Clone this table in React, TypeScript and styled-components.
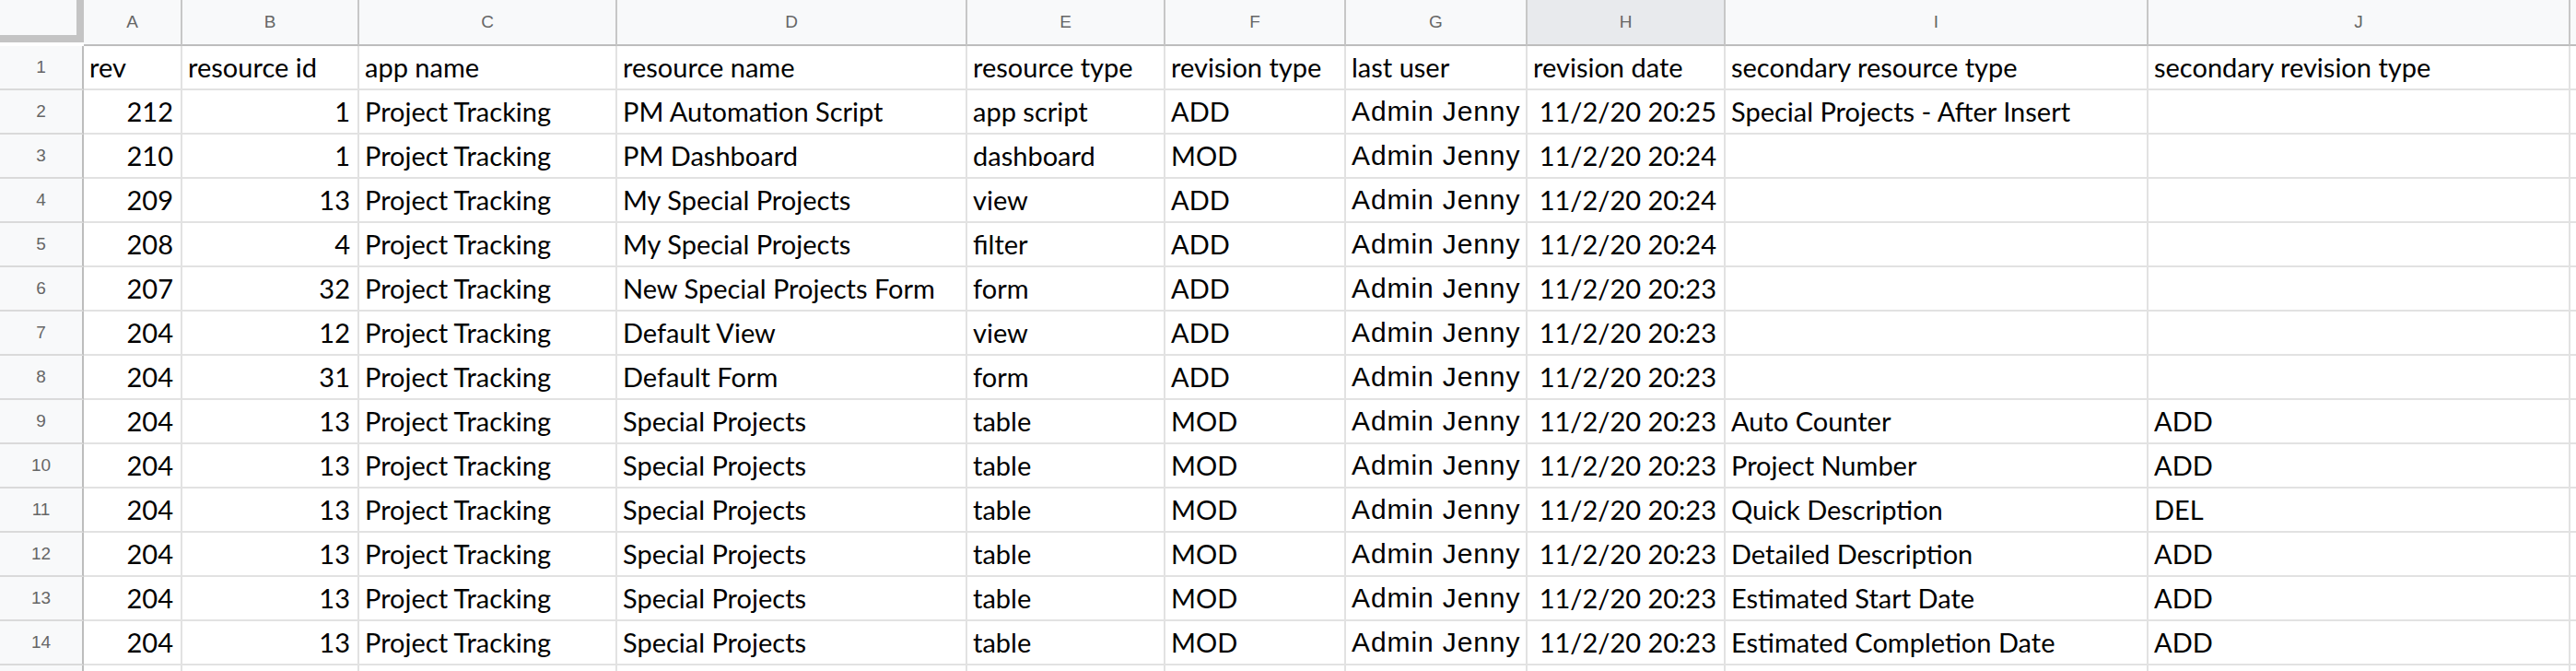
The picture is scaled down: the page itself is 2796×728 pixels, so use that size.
import React from "react";
import styled, { createGlobalStyle } from "styled-components";

const GlobalStyle = createGlobalStyle`
  html, body {
    margin: 0;
    padding: 0;
    background: #ffffff;
    overflow: hidden;
  }
`;

const colWidths = [107, 192, 280, 380, 215, 196, 197, 215, 459, 458];
const letters = ["A", "B", "C", "D", "E", "F", "G", "H", "I", "J"];

const StyledSheet = styled.div`
  display: grid;
  grid-template-columns: 91px ${colWidths.map((w) => `${w}px`).join(" ")} 1fr;
  grid-template-rows: 50px;
  grid-auto-rows: 48px;
  width: 2796px;
  height: 728px;
  overflow: hidden;
  background: #ffffff;
`;

const StyledCorner = styled.div`
  box-sizing: border-box;
  height: 46px;
  margin-bottom: 4px;
  background: #f8f9fa;
  border-right: 8px solid #c4c4c4;
  border-bottom: 8px solid #c4c4c4;
`;

const StyledColHeader = styled.div<{ $active?: boolean }>`
  box-sizing: border-box;
  display: flex;
  align-items: center;
  justify-content: center;
  background: ${(p) => (p.$active ? "#e8eaed" : "#f8f9fa")};
  border-right: 2px solid #c7c7c7;
  border-bottom: 2px solid #bdbdbd;
  font-family: "Liberation Sans", Arial, sans-serif;
  font-size: 19px;
  color: #666666;
`;

const StyledRowHeader = styled.div`
  box-sizing: border-box;
  display: flex;
  align-items: center;
  justify-content: center;
  background: #f8f9fa;
  border-right: 2px solid #bdbdbd;
  border-bottom: 2px solid #dadada;
  font-family: "Liberation Sans", Arial, sans-serif;
  font-size: 19px;
  color: #666666;
`;

const StyledCell = styled.div<{ $num?: boolean; $user?: boolean }>`
  box-sizing: border-box;
  border-right: 2px solid #e2e2e2;
  border-bottom: 2px solid #e2e2e2;
  padding: 1px ${(p) => (p.$num ? "8px" : "6px")} 0 6px;
  text-align: ${(p) => (p.$num ? "right" : "left")};
  white-space: nowrap;
  overflow: hidden;
  color: #000000;
  font-family: ${(p) =>
    p.$user ? `"Liberation Sans", Arial, sans-serif` : `Lato, "Open Sans", sans-serif`};
  font-size: ${(p) => (p.$user ? "30px" : "29px")};
  letter-spacing: ${(p) => (p.$user ? "0.9px" : "0")};
  line-height: 43px;
`;

const StyledFiller = styled.div<{ $head?: boolean }>`
  box-sizing: border-box;
  background: ${(p) => (p.$head ? "#f8f9fa" : "#ffffff")};
  border-bottom: 2px solid ${(p) => (p.$head ? "#bdbdbd" : "#e2e2e2")};
`;

type Row = (string | number)[];

const header: Row = [
  "rev",
  "resource id",
  "app name",
  "resource name",
  "resource type",
  "revision type",
  "last user",
  "revision date",
  "secondary resource type",
  "secondary revision type",
];

const data: Row[] = [
  [212, 1, "Project Tracking", "PM Automation Script", "app script", "ADD", "Admin Jenny", "11/2/20 20:25", "Special Projects - After Insert", ""],
  [210, 1, "Project Tracking", "PM Dashboard", "dashboard", "MOD", "Admin Jenny", "11/2/20 20:24", "", ""],
  [209, 13, "Project Tracking", "My Special Projects", "view", "ADD", "Admin Jenny", "11/2/20 20:24", "", ""],
  [208, 4, "Project Tracking", "My Special Projects", "filter", "ADD", "Admin Jenny", "11/2/20 20:24", "", ""],
  [207, 32, "Project Tracking", "New Special Projects Form", "form", "ADD", "Admin Jenny", "11/2/20 20:23", "", ""],
  [204, 12, "Project Tracking", "Default View", "view", "ADD", "Admin Jenny", "11/2/20 20:23", "", ""],
  [204, 31, "Project Tracking", "Default Form", "form", "ADD", "Admin Jenny", "11/2/20 20:23", "", ""],
  [204, 13, "Project Tracking", "Special Projects", "table", "MOD", "Admin Jenny", "11/2/20 20:23", "Auto Counter", "ADD"],
  [204, 13, "Project Tracking", "Special Projects", "table", "MOD", "Admin Jenny", "11/2/20 20:23", "Project Number", "ADD"],
  [204, 13, "Project Tracking", "Special Projects", "table", "MOD", "Admin Jenny", "11/2/20 20:23", "Quick Description", "DEL"],
  [204, 13, "Project Tracking", "Special Projects", "table", "MOD", "Admin Jenny", "11/2/20 20:23", "Detailed Description", "ADD"],
  [204, 13, "Project Tracking", "Special Projects", "table", "MOD", "Admin Jenny", "11/2/20 20:23", "Estimated Start Date", "ADD"],
  [204, 13, "Project Tracking", "Special Projects", "table", "MOD", "Admin Jenny", "11/2/20 20:23", "Estimated Completion Date", "ADD"],
];

const emptyRow: Row = ["", "", "", "", "", "", "", "", "", ""];

export default function App() {
  const rows = [header, ...data];

  return (
    <>
      <GlobalStyle />
      <StyledSheet>
        <StyledCorner />
        {letters.map((l) => (
          <StyledColHeader key={l} $active={l === "H"}>
            {l}
          </StyledColHeader>
        ))}
        <StyledFiller $head />

        {rows.map((row, r) => (
          <React.Fragment key={r}>
            <StyledRowHeader>{r + 1}</StyledRowHeader>
            {row.map((value, c) => {
              // numbers and dates line up on the right like in the sheet
              const isNum = r > 0 && (c < 2 || c === 7);
              return (
                <StyledCell key={c} $num={isNum} $user={r > 0 && c === 6}>
                  {value}
                </StyledCell>
              );
            })}
            <StyledFiller />
          </React.Fragment>
        ))}

        {/* row 15 only peeks in at the bottom edge */}
        <StyledRowHeader />
        {emptyRow.map((_, c) => (
          <StyledCell key={c} />
        ))}
        <StyledFiller />
      </StyledSheet>
    </>
  );
}
